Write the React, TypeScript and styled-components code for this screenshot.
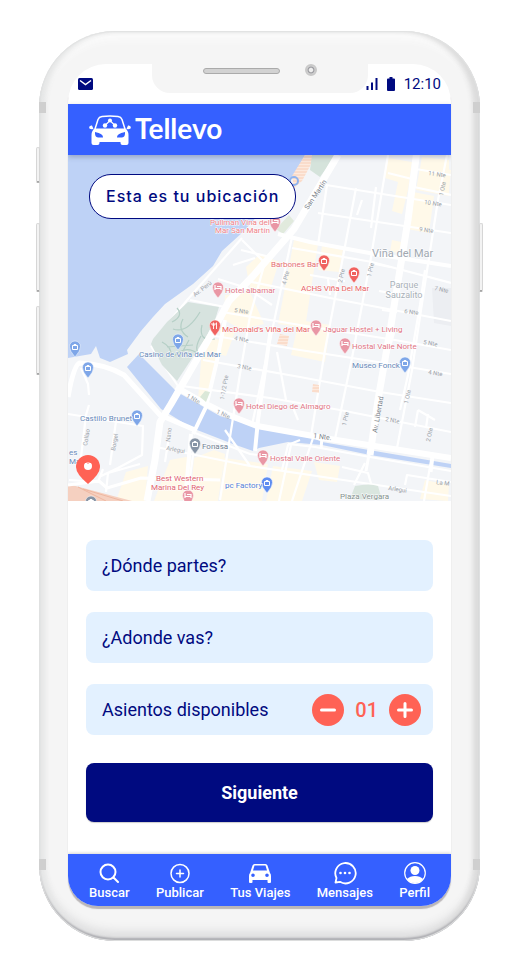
import React, { useState } from "react";
import styled, { createGlobalStyle } from "styled-components";

const color = {
  blue: "#3560ff",
  navy: "#000a80",
  coral: "#ff6255",
  field: "#e3f1ff",
  shell: "#f5f5f5",
};

const GlobalStyle = createGlobalStyle`
  *, *::before, *::after { box-sizing: border-box; }
  body { margin: 0; background: #fff; font-family: Roboto, sans-serif; color: ${color.navy}; }
  button, input { font: inherit; color: inherit; }
`;

const Page = styled.main`
  padding: 31px 42px 39px 39px;
`;

const Phone = styled.div`
  position: relative;
  padding: 33px 29px 35px;
  border-radius: 76px;
  background: ${color.shell};
  box-shadow:
    inset 0 0 1px 1px #e2e3e3,
    inset 0 -3px 2px #a9a9ae,
    inset -7px 0 5px #dcdcdc,
    inset 6px 0 5px #e6e7e7,
    inset 0 -10px 10px #dededf,
    inset 0 8px 8px #fcfcfc;
`;

const SideKey = styled.span<{ $side: "left" | "right"; $top: number; $height: number }>`
  position: absolute;
  ${(p) => p.$side}: -3px;
  top: ${(p) => p.$top}px;
  width: 4px;
  height: ${(p) => p.$height}px;
  border: 1px solid #d6d6d6;
  border-bottom: 2px solid #a6a6a6;
  border-radius: 2px;
  background: #f3f3f3;
`;

const Antenna = styled.span<{ $side: "left" | "right"; $edge: "top" | "bottom" }>`
  position: absolute;
  ${(p) => p.$side}: 0;
  ${(p) => p.$edge}: 71px;
  width: 7px;
  height: 11px;
  background: #cfcfcf;
`;

const Screen = styled.div`
  display: flex;
  flex-direction: column;
  border-radius: 38px 38px 30px 30px;
  background: #fff;
  overflow: hidden;
  box-shadow: 0 3px 1px #bab6b8;
`;

const StatusBar = styled.div`
  position: relative;
  display: flex;
  align-items: center;
  justify-content: space-between;
  height: 40px;
  padding: 0 10px;
`;

const StatusGroup = styled.div`
  display: flex;
  align-items: center;
  gap: 9px;
  position: relative;
  font-size: 15px;
  line-height: 20px;
`;

const Notch = styled.div`
  position: absolute;
  top: 0;
  left: 84px;
  right: 83px;
  height: 29px;
  border-radius: 0 0 18px 18px;
  background: ${color.shell};
`;

const Speaker = styled.span`
  position: absolute;
  top: 4px;
  left: 51px;
  width: 77px;
  height: 6px;
  border: 1px solid #aaa;
  border-radius: 3px;
  background: #d2d2d2;
`;

const Camera = styled.span`
  position: absolute;
  top: 0;
  left: 153px;
  width: 12px;
  height: 12px;
  border: 2px solid #c9c9c9;
  border-radius: 50%;
  background: radial-gradient(#eee 30%, #98989d 50%, #ddd 75%);
`;

const Header = styled.header`
  display: flex;
  align-items: center;
  gap: 4px;
  height: 51px;
  padding: 0 21px;
  background: ${color.blue};
  color: #fff;
  position: relative;
  box-shadow: 0 2px 5px rgba(60, 60, 80, 0.3);
  z-index: 1;
`;

const Brand = styled.h1`
  margin: 0;
  padding-bottom: 4px;
  font: 700 28px/32px Lato, sans-serif;
`;

const MapArea = styled.section`
  position: relative;
  aspect-ratio: 383 / 346;
  overflow: hidden;
`;

const MapDrawing = styled.svg`
  display: block;
  width: 100%;
  height: 100%;
  font-family: Roboto, sans-serif;
`;

const LocationPill = styled.div`
  position: absolute;
  top: 19px;
  left: 21px;
  padding: 8px 16px;
  border: 1px solid ${color.navy};
  border-radius: 22px;
  background: #fff;
  font: 500 16px/27px Inter, sans-serif;
  letter-spacing: 1px;
  white-space: nowrap;
`;

const Form = styled.form`
  display: flex;
  flex-direction: column;
  gap: 21px;
  padding: 39px 18px 32px;
  font-size: 18px;
  line-height: 24px;
`;

const TextField = styled.input`
  height: 51px;
  width: 100%;
  padding: 0 16px;
  border: 0;
  border-radius: 8px;
  background: ${color.field};
  &::placeholder { color: ${color.navy}; opacity: 1; }
`;

const SeatField = styled.div`
  display: flex;
  align-items: center;
  justify-content: space-between;
  height: 51px;
  padding: 0 12px 0 16px;
  border-radius: 8px;
  background: ${color.field};
`;

const Stepper = styled.div`
  display: flex;
  align-items: center;
  gap: 11px;
`;

const SeatCount = styled.output`
  color: ${color.coral};
  font-size: 20px;
  font-weight: 500;
  line-height: 24px;
`;

const RoundButton = styled.button`
  display: grid;
  place-items: center;
  width: 32px;
  height: 32px;
  padding: 0;
  border: 0;
  border-radius: 50%;
  background: ${color.coral};
  color: #fff;
`;

const NextButton = styled.button`
  height: 59px;
  margin-top: 7px;
  border: 0;
  border-radius: 8px;
  background: ${color.navy};
  color: #fff;
  font-weight: 700;
  box-shadow: 0 1px 1px #ccc;
`;

const NavBar = styled.nav`
  display: flex;
  justify-content: space-between;
  height: 52px;
  padding: 7px 21px 0;
  background: ${color.blue};
  box-shadow: 0 -1px 3px #d5d5d5;
`;

const NavLink = styled.a`
  display: flex;
  flex-direction: column;
  align-items: center;
  color: #fff;
  font-size: 13px;
  font-weight: 500;
  line-height: 16px;
  text-decoration: none;
  white-space: nowrap;
  svg { display: block; height: 24px; }
`;

const CarLogo = () => (
  <svg width="42" height="30" viewBox="0 0 42 30" fill="none" aria-hidden="true">
    <path d="M6 14 9 4.500Q10 2 13 1.600 21 .5 29 1.600q3 .4 4 2.900L36 14" stroke="#fff" strokeWidth="1.500" />
    <path fill="#fff" fillRule="evenodd" d="M5.500 13.500h31q3 2.500 3 6.500v8q0 2-2 2h-4q-2 0-2-2v-1H10.500v1q0 2-2 2h-4q-2 0-2-2v-8q0-4 3-6.500ZM6 17q-.5 5 3 5.500h5q.5-4-8-5.500Zm30 0q.5 5-3 5.500h-5q-.5-4 8-5.500Z" />
    <path fill="#fff" d="M4.500 14 3 10.500q-3-.5-2.900 2.500.4 1.500 4.400 1Zm33 0 1.500-3.500q3-.5 2.900 2.500-.4 1.500-4.400 1Z" />
    <path d="m16 10.500 5-5 5 5" stroke="#fff" strokeWidth="1.200" />
    <circle cx="21" cy="5.500" r="2" fill="#fff" /><circle cx="16" cy="10.500" r="2.200" fill="#fff" /><circle cx="26" cy="10.500" r="2.200" fill="#fff" />
  </svg>
);

const yellowBlocks = [
  "388,158 412,162 408,190 402,214 392,211 398,182 385,178",
  "422,157 449,160 449,196 416,190", "444,168 451,170 449,190 441,188",
  "413,192 434,196 429,233 407,229", "294,240 318,244 305,328 278,324",
  "322,246 343,250 339,272 318,270", "246,267 260,254 279,262 270,290 250,288",
  "225,295 250,292 264,324 241,329 224,320", "392,240 406,243 403,253 390,252",
  "203,336 220,340 216,362 206,404 198,400", "299,320 330,325 325,362 291,355",
  "220,330 235,332 226,356 218,354",
  "170,460 191,456 189,500 154,501", "194,458 214,450 225,454 218,501 190,501",
  "224,458 268,464 262,501 220,501", "273,466 312,471 302,501 266,501",
  "314,462 340,466 337,482 319,480", "126,472 148,466 145,501 116,501",
  "425,480 449,485 448,501 420,499",
];

const minorRoads = [
  "M320 184 451 205M318 213 451 233M292 248 372 262 451 283M247 281 330 298 451 321",
  "M222 312 300 325 395 340 451 350M209 335 300 350 378 362 451 374",
  "M203 360 300 377 380 392 451 403M182 386 270 398 340 410 451 432",
  "M388 155 370 263 352 358 335 439M356 188 342 262 325 350 311 436M327 185 318 245M376 187 371 228M362 200 357 215",
  "M292 237 282 284 268 350 252 425M447 155 438 200 424 290 412 370 397 448M265 262 250 316 240 374 220 500",
  "M310 275 345 281M375 264 390 267M388 173 412 179M414 187 451 195M416 169 451 175",
  "M233 265 255 258M218 279 247 288 272 305M241 250 270 257M242 240 264 262",
  "M190 300 225 307M151 346 178 386M154 340 188 299 242 238M158 346 170 328 192 305",
  "M156 447 250 466 350 481 451 496M170 430 165 462M225 430 250 466M195 440 187 500M291 445 279 501M313 438 292 501",
  "M68 414 143 426 142 455 118 468 99 477M116 421 110 465M69 480 98 482 103 469M106 492 108 473 140 464",
  "M81 368 88 384 89 395M89 405 86 415 79 474M425 270 420 305 408 375 400 410M418 410 435 420",
  "M365 463 354 485M342 467 368 473 374 494M405 485 407 475 451 482M432 455 424 501M300 440 288 445 282 470",
  "M277 352 286 400M380 381 394 333M292 405 298 420M328 279 330 295M379 291 402 295M382 310 397 312M418 410 415 427M428 414 426 428",
];

type PinProps = { x: number; y: number; fill: string; glyph?: "bed" | "bag" | "fork" };

const Pin = ({ x, y, fill, glyph = "bag" }: PinProps) => (
  <g transform={`translate(${x} ${y})`}>
    <path d="M0 8Q-5.500 2-5.500-2.500a5.500 5.500 0 0 1 11 0Q5.500 2 0 8Z" fill={fill} stroke="#fff" strokeWidth=".5" />
    {glyph === "bed" && <path d="M-3-5v5M-3-1.500h6V0M-1-3.500h4v2" stroke="#fff" strokeWidth="1.200" fill="none" />}
    {glyph === "bag" && <path d="M-2.500-3.500h5v4h-5ZM-1-3.500v-1h2v1" stroke="#fff" strokeWidth="1" fill="none" />}
    {glyph === "fork" && <path d="M-1.500-5.500V1M1.500-5.500V1M-3-5v2h3v-2" stroke="#fff" strokeWidth=".9" fill="none" />}
  </g>
);

const pink = "#e997a5";
const red = "#f0625f";
const azure = "#7ea6e8";
const slate = "#8794a5";

const pins: PinProps[] = [
  { x: 275, y: 224, fill: pink, glyph: "bed" },
  { x: 324, y: 263, fill: red },
  { x: 354, y: 275, fill: red },
  { x: 218, y: 290, fill: pink, glyph: "bed" },
  { x: 215, y: 328, fill: red, glyph: "fork" },
  { x: 316, y: 328, fill: pink, glyph: "bed" },
  { x: 345, y: 346, fill: pink, glyph: "bed" },
  { x: 405, y: 365, fill: azure },
  { x: 178, y: 342, fill: azure },
  { x: 75, y: 349, fill: azure },
  { x: 88, y: 370, fill: azure },
  { x: 137, y: 418, fill: azure },
  { x: 195, y: 446, fill: slate },
  { x: 239, y: 406, fill: pink, glyph: "bed" },
  { x: 263, y: 458, fill: pink, glyph: "bed" },
  { x: 267, y: 485, fill: "#5f8df0" },
  { x: 188, y: 498, fill: pink, glyph: "bed" },
  { x: 91, y: 504, fill: slate },
];

const places: [string, number, number, string, "start" | "middle" | "end", number][] = [
  ["Pullman Vina del", 210, 225, "#ee7f88", "start", 8],
  ["Mar San Martín", 215, 233, "#ee7f88", "start", 8],
  ["Barbones Bar", 271, 267, "#e66d70", "start", 8],
  ["ACHS Viña Del Mar", 301, 291, "#e85f63", "start", 8],
  ["Hotel albamar", 225, 293, "#df7484", "start", 8],
  ["McDonald's Viña del Mar", 222, 332, "#e85f63", "start", 8],
  ["Jaguar Hostel + Living", 323, 332, "#df7484", "start", 8],
  ["Hostal Valle Norte", 352, 349, "#df7484", "start", 8],
  ["Museo Fonck", 352, 368, "#6688b8", "start", 8],
  ["Casino de Viña del Mar", 139, 357, "#6688b8", "start", 8],
  ["Castillo Brunet", 80, 421, "#6688b8", "start", 8],
  ["Fonasa", 202, 449, "#718093", "start", 8],
  ["Hotel Diego de Almagro", 246, 409, "#df7484", "start", 8],
  ["Hostal Valle Oriente", 270, 461, "#df7484", "start", 8],
  ["Best Western", 156, 481, "#e0626f", "start", 8],
  ["Marina Del Rey", 151, 490, "#e0626f", "start", 8],
  ["pc Factory", 225, 488, "#557fd4", "start", 8],
  ["Plaza Vergara", 340, 499, "#83908d", "start", 8],
  ["Viña del Mar", 372, 257, "#a0a8b1", "start", 11],
  ["Parque", 404, 288, "#a7afb7", "middle", 9],
  ["Sauzalito", 404, 298, "#a7afb7", "middle", 9],
  ["es", 69, 455, "#6688b8", "start", 8],
  ["Ma", 69, 464, "#6688b8", "start", 8],
];

const streets: [string, number, number, number][] = [
  ["11 Nte", 428, 175, 8], ["10 Nte", 424, 204, 8],
  ["9 Nte", 419, 231, 8], ["1 Ote", 443, 196, -78], ["4 Pte", 286, 285, -76],
  ["2 Pte", 342, 283, -78], ["1 Pte", 371, 277, -78], ["7 Nte", 434, 290, 12],
  ["6 Nte", 404, 313, 8], ["5 Nte", 423, 344, 10], ["4 Nte", 428, 374, 9],
  ["1 Pte", 346, 426, -78], ["1 Ote", 408, 404, -78], ["2 Nte", 385, 421, 10],
  ["2 Ote", 430, 442, -78], ["Av. Perú", 195, 297, -38], ["5 Nte", 234, 312, 8],
  ["4 Nte", 234, 340, 10], ["3 Nte", 237, 368, 10], ["1-1/2 Pte", 224, 400, -80],
  ["1 Nte.", 186, 397, 29], ["1 Nte.", 216, 413, 25], ["Arlegui", 166, 450, 10],
  ["Collao", 87, 446, -80], ["Borgel", 115, 451, -80], ["Nano", 170, 442, -84],
  ["Arlegui", 388, 490, 8], ["La M", 436, 484, 8],
];

const CityMap = () => (
  <MapDrawing viewBox="68 155 383 346" preserveAspectRatio="xMidYMid slice" role="img" aria-label="Mapa de Viña del Mar">
    <defs>
      <pattern id="hatch" width="3" height="3" patternUnits="userSpaceOnUse">
        <rect width="3" height="3" fill="#fdeade" /><path d="M0 1h3" stroke="#f6c9ae" strokeWidth=".8" />
      </pattern>
    </defs>
    <rect x="68" y="155" width="383" height="346" fill="#f3f5f8" />
    {yellowBlocks.map((points) => <polygon key={points} points={points} fill="#fff9e9" />)}
    <path d="M432 288h19v38l-17-3Z" fill="#eceef2" />
    <path d="M68 155H305L295 174 243 232 222 251 213 266 193 284 165 304 153 317 141 331 127 350 128 354 110 362 100 358 96 346 91 354 68 358Z" fill="#bed2f6" />
    <path d="M305 155h11l-14 26-8 7-2-12Z" fill="url(#hatch)" />
    <path d="M312 155h24l-16 22-10-7Z" fill="#d5e3db" />
    <path d="m276 229 13-14 5 6-11 13Z" fill="#e1eadd" />
    <path d="M68 484 132 501H68Z" fill="#f5d0c0" />
    <path d="M83 489l40 12M78 487l28 14" stroke="#eeb7a0" />
    <path d="M127 367 139 354 177 392 220 416 258 427 313 438 322 442 451 464V468L370 455 322 445 288 442 259 448 253 451 233 444 192 428 161 409Z" fill="#bed2f6" />
    <g fill="none" stroke="#fff" strokeWidth="2.200" strokeLinejoin="round">
      {minorRoads.map((d) => <path key={d} d={d} />)}
    </g>
    <path d="M188 302 219 307 215 320 208 334 177 381 162 365 151 344 153 339 167 322Z" fill="#d7e3df" />
    <path d="M172 322q12-6 5-14m-4 21q14 5 27-17m-38 30q10 5 9 14m30-20q-8 14-1 18m-11-14-10 18m19-4q-12-10-25 3m-6-10 26-2m9-20q-4 17 13 14m-27-2q-11-7-5-18" fill="none" stroke="#b5cfc6" strokeWidth="1.200" />
    <g fill="none" stroke="#fff" strokeLinejoin="round">
      <path strokeWidth="7" d="M338 155 294 229 253 276 229 301 211 335 171 404 160 422 155 460 147 501" />
      <path strokeWidth="7" d="M417 150 408 220 391 325 378 400 370 455" />
      <path strokeWidth="6" d="M176 387 204 403 226 414 257 426 330 439 451 458" />
      <path strokeWidth="5" d="M68 397Q74 363 80 363 105 364 124 375L160 415 195 430" />
      <path strokeWidth="2" d="M195 433 250 454 275 457M288 444 315 447 370 457 451 471" />
      <path strokeWidth="4" d="M225 320 216 365 206 407 193 434M271 328 258 420 255 451M191 434 185 501" />
      <path strokeWidth="4" d="M278 234 310 242 380 255 451 266" />
      <path strokeWidth="3" d="M322 437 321 449M370 449 366 471M433 456 431 472M68 485 99 481 107 488 141 478 220 480" />
    </g>
    <path d="m200 397 5-6 5 1-4 10Z" fill="#dbe8d8" />
    <path d="M280 334 289 336 287 346 277 344ZM313 384l6 1v8l-7-1Z" fill="url(#hatch)" />
    <path d="M355 486q15-3 23 0l4 14-32-1Z" fill="#dae6df" />
    <g fontSize="6" fill="#9ba1a8">
      {streets.map(([name, x, y, turn]) => (
        <text key={`${name}${x}`} x={x} y={y} transform={`rotate(${turn} ${x} ${y})`}>{name}</text>
      ))}
    </g>
    <g fontSize="7" fill="#7b8289">
      <text x="308" y="210" transform="rotate(-56 308 210)">San Martín</text>
      <text x="313" y="438" transform="rotate(7 313 438)">1 Nte.</text>
      <text x="377" y="433" transform="rotate(-80 377 433)">Av. Libertad</text>
    </g>
    <circle cx="294" cy="181" r="4" fill="none" stroke="#8fb3ee" strokeWidth="2" />
    {pins.map((pin) => <Pin key={`${pin.x}-${pin.y}`} {...pin} />)}
    {places.map(([name, x, y, fill, anchor, size]) => (
      <text key={name} x={x} y={y} fill={fill} textAnchor={anchor} fontSize={size} stroke="#fff" strokeWidth="1" paintOrder="stroke">{name}</text>
    ))}
    <path d="M88 484Q76 474 76 467a12 12 0 0 1 24 0q0 7-12 17Z" fill={color.coral} />
    <circle cx="88" cy="466" r="4" fill="#fff" /><path d="m84.500 463 2-1 1.500 1.500 1.500-1.500 2 1" fill="none" stroke={color.coral} />
  </MapDrawing>
);

const SearchIcon = () => (
  <svg width="20" viewBox="0 0 20 24" fill="none" stroke="#fff" strokeWidth="2" strokeLinecap="round" aria-hidden="true">
    <circle cx="9" cy="11" r="7.500" /><path d="m14.500 16.500 4.500 4.500" />
  </svg>
);

const PublishIcon = () => (
  <svg width="20" viewBox="0 0 20 24" fill="none" stroke="#fff" strokeWidth="1.500" strokeLinecap="round" aria-hidden="true">
    <circle cx="10" cy="12.500" r="9" /><path d="M10 9v7M6.500 12.500h7" />
  </svg>
);

const TripsIcon = () => (
  <svg width="22" viewBox="0 0 22 24" aria-hidden="true">
    <path fill="#fff" fillRule="evenodd" d="M5.500 3h11q1.500 0 2 1.500L21 12q1 1 1 3v6q0 1-1 1h-1.500q-1 0-1-1v-2h-15v2q0 1-1 1H1q-1 0-1-1v-6q0-2 1-3l2.500-7.500Q4 3 5.500 3Zm0 1.500L4 9.500h14L16.500 4.500ZM4 12.500a1.800 1.800 0 1 0 0 3.600 1.800 1.800 0 0 0 0-3.600Zm14 0a1.800 1.800 0 1 0 0 3.600 1.800 1.800 0 0 0 0-3.600Z" />
  </svg>
);

const MessagesIcon = () => (
  <svg width="24" viewBox="0 0 24 24" fill="none" stroke="#fff" strokeWidth="1.800" strokeLinejoin="round" aria-hidden="true">
    <path d="M3.500 17A10.200 10.200 0 1 1 7 20.800L2.500 21.500Z" />
    <g fill="#fff" stroke="none"><circle cx="7.500" cy="12" r="1.300" /><circle cx="12" cy="12" r="1.300" /><circle cx="16.500" cy="12" r="1.300" /></g>
  </svg>
);

const ProfileIcon = () => (
  <svg width="22" viewBox="0 0 22 24" aria-hidden="true">
    <circle cx="11" cy="12" r="10.300" fill="none" stroke="#fff" strokeWidth="1.200" />
    <circle cx="11" cy="9.500" r="4.500" fill="#fff" />
    <path d="M3 18q3-3 8-3t8 3q-3 4-8 4t-8-4Z" fill="#fff" />
  </svg>
);

const navItems = [
  { label: "Buscar", Icon: SearchIcon },
  { label: "Publicar", Icon: PublishIcon },
  { label: "Tus Viajes", Icon: TripsIcon },
  { label: "Mensajes", Icon: MessagesIcon },
  { label: "Perfil", Icon: ProfileIcon },
];

export default function App() {
  const [seats, setSeats] = useState(1);
  return (
    <Page>
      <GlobalStyle />
      <Phone>
        <SideKey $side="left" $top={116} $height={36} />
        <SideKey $side="left" $top={192} $height={69} />
        <SideKey $side="left" $top={275} $height={69} />
        <SideKey $side="right" $top={192} $height={69} />
        <Antenna $side="left" $edge="top" /><Antenna $side="right" $edge="top" />
        <Antenna $side="left" $edge="bottom" /><Antenna $side="right" $edge="bottom" />
        <Screen>
          <StatusBar>
            <Notch><Speaker /><Camera /></Notch>
            <StatusGroup>
              <svg width="15" height="12" viewBox="0 0 15 12" aria-hidden="true">
                <rect width="15" height="12" rx="1.500" fill={color.navy} /><path d="m2 2.500 5.500 4 5.500-4" fill="none" stroke="#fff" strokeWidth="1.500" />
              </svg>
            </StatusGroup>
            <StatusGroup>
              <svg width="12" height="12" viewBox="0 0 12 12" aria-hidden="true"><path d="M1.500 8v4M6 4.500V12M10.500 0v12" stroke={color.navy} strokeWidth="2" /></svg>
              <svg width="8" height="14" viewBox="0 0 8 14" aria-hidden="true"><path d="M2.500 0h3v1.500H7q1 0 1 1V13q0 1-1 1H1q-1 0-1-1V2.500q0-1 1-1h1.500Z" fill={color.navy} /></svg>
              <time>12:10</time>
            </StatusGroup>
          </StatusBar>
          <Header><CarLogo /><Brand>Tellevo</Brand></Header>
          <MapArea><CityMap /><LocationPill>Esta es tu ubicación</LocationPill></MapArea>
          <Form onSubmit={(event) => event.preventDefault()}>
            <TextField aria-label="¿Dónde partes?" placeholder="¿Dónde partes?" />
            <TextField aria-label="¿Adonde vas?" placeholder="¿Adonde vas?" />
            <SeatField>
              <label htmlFor="seats">Asientos disponibles</label>
              <Stepper>
                <RoundButton type="button" aria-label="Menos asientos" onClick={() => setSeats(Math.max(1, seats - 1))}>
                  <svg width="18" height="18" viewBox="0 0 18 18" aria-hidden="true"><path d="M2.500 9h13" stroke="#fff" strokeWidth="3" strokeLinecap="round" /></svg>
                </RoundButton>
                <SeatCount id="seats">{String(seats).padStart(2, "0")}</SeatCount>
                <RoundButton type="button" aria-label="Más asientos" onClick={() => setSeats(seats + 1)}>
                  <svg width="18" height="18" viewBox="0 0 18 18" aria-hidden="true"><path d="M2.500 9h13M9 2.500v13" stroke="#fff" strokeWidth="3" strokeLinecap="round" /></svg>
                </RoundButton>
              </Stepper>
            </SeatField>
            <NextButton type="submit">Siguiente</NextButton>
          </Form>
          <NavBar aria-label="Principal">
            {navItems.map(({ label, Icon }) => <NavLink key={label} href="#"><Icon />{label}</NavLink>)}
          </NavBar>
        </Screen>
      </Phone>
    </Page>
  );
}
